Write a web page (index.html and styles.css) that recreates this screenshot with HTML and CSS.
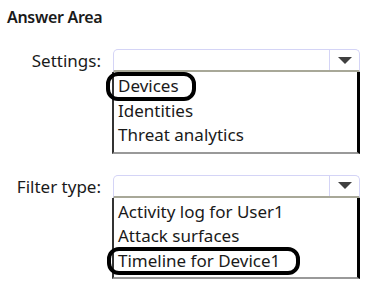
FILE: index.html
```html
<!DOCTYPE html>
<html lang="en">
<head>
  <meta charset="UTF-8">
  <title>Answer Area</title>
  <link rel="stylesheet" href="styles.css">
</head>
<body>
  <div class="answer-area">
    <div class="title">Answer Area</div>

    <div class="field first">
      <div class="label">Settings:</div>
      <div class="dropdown">
        <div class="select">
          <div class="value"></div>
          <div class="arrow"><span class="tri"></span></div>
        </div>
        <div class="list">
          <div class="item circled c1">Devices</div>
          <div class="item">Identities</div>
          <div class="item">Threat analytics</div>
        </div>
      </div>
    </div>

    <div class="field second">
      <div class="label">Filter type:</div>
      <div class="dropdown">
        <div class="select">
          <div class="value"></div>
          <div class="arrow"><span class="tri"></span></div>
        </div>
        <div class="list">
          <div class="item">Activity log for User1</div>
          <div class="item">Attack surfaces</div>
          <div class="item circled c2">Timeline for Device1</div>
        </div>
      </div>
    </div>
  </div>
</body>
</html>
```

FILE: styles.css
```css
body {
  margin: 0;
  background: #fff;
  font-family: "Noto Sans", "Open Sans", sans-serif;
  color: #1a1a1a;
}
.answer-area {
  padding: 7px 0 0 7px;
}
.title {
  font-size: 16px;
  font-weight: 600;
  line-height: 20px;
  letter-spacing: -0.3px;
}
.field {
  display: grid;
  grid-template-columns: 94px 247px;
  column-gap: 12px;
}
.field.first {
  margin-top: 22px;
}
.field.second {
  margin-top: 21px;
}
.label {
  text-align: right;
  font-size: 17px;
  line-height: 23px;
}
.select {
  display: flex;
  height: 23px;
  box-sizing: border-box;
  border: 1px solid #d4d4f6;
  border-bottom: 2px solid #a8a898;
  border-radius: 5px 5px 0 0;
}
.value {
  flex: 1;
}
.arrow {
  width: 29px;
  border-left: 1px solid #d4d4f6;
  display: flex;
  align-items: center;
  justify-content: center;
}
.tri {
  width: 0;
  height: 0;
  border-left: 7px solid transparent;
  border-right: 7px solid transparent;
  border-top: 7px solid #404040;
}
.list {
  margin-left: -1px;
  border-left: 2px solid #333;
  border-right: 3px solid #000;
  border-bottom: 2px solid #999;
  padding: 2px 0 4px 4px;
}
.item {
  position: relative;
  font-size: 17px;
  line-height: 24.5px;
  white-space: nowrap;
}
.circled::after {
  content: "";
  position: absolute;
  top: -2px;
  bottom: -2px;
  left: -12px;
  border: 4px solid #000;
  border-radius: 12px;
}
.c1::after {
  width: 82px;
}
.c2::after {
  left: -11px;
  width: 185px;
}
```
